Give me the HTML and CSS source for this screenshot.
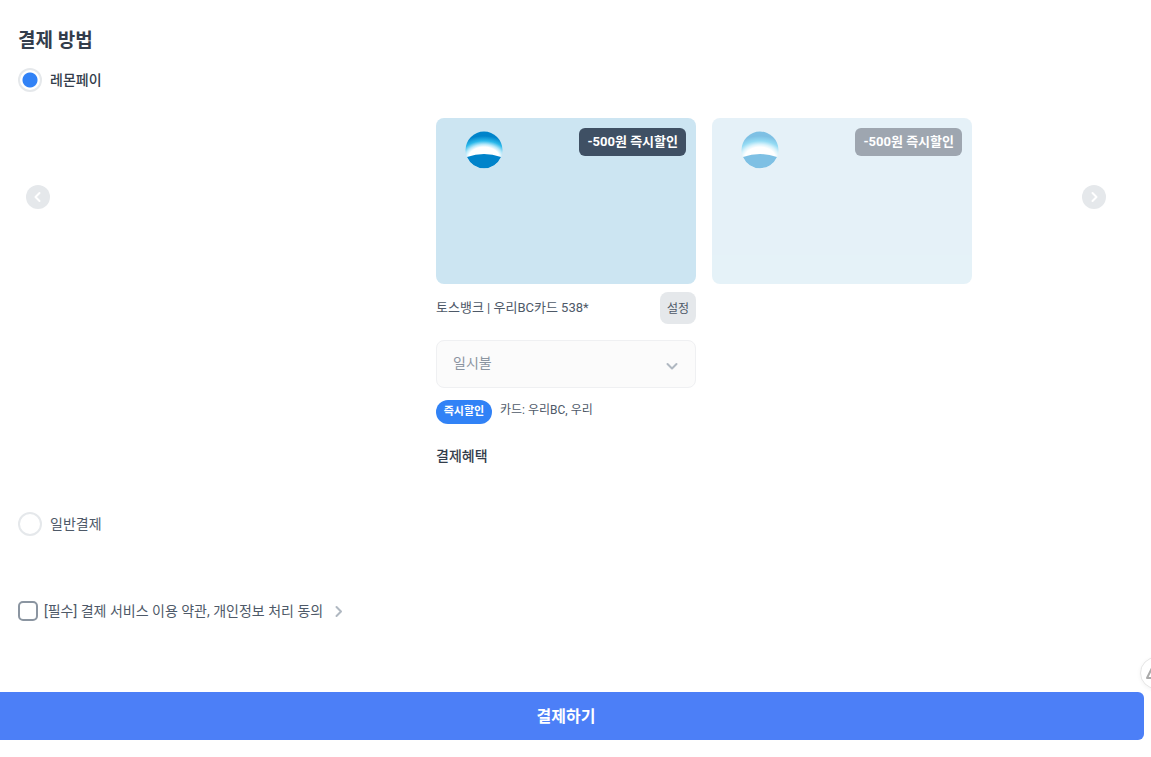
FILE: index.html
```html
<!DOCTYPE html>
<html lang="ko">
<head>
    <meta charset="UTF-8">
    <meta name="viewport" content="width=device-width, initial-scale=1.0">
    <title>결제 방법</title>
    <link rel="stylesheet" href="styles.css">
</head>
<body>
    <form class="payment">
        <h2>결제 방법</h2>

        <label class="method">
            <input type="radio" name="method" value="lemonpay" checked>
            <span>레몬페이</span>
        </label>

        <div class="carousel">
            <div class="slot slot-left">
                <button type="button" class="arrow" aria-label="이전 카드">
                    <svg width="24" height="24" viewBox="0 0 24 24"><path d="M13.5 8 9.5 12l4 4" /></svg>
                </button>
            </div>

            <div class="card">
                <svg class="logo" width="38" height="38" viewBox="0 0 38 38">
                    <defs>
                        <radialGradient id="glow" gradientUnits="userSpaceOnUse" cx="0" cy="0" r="1" gradientTransform="translate(19 27) scale(31 22)">
                            <stop offset="0.5" stop-color="#fff" />
                            <stop offset="0.62" stop-color="#b5e8fa" />
                            <stop offset="0.78" stop-color="#2bb8ea" />
                            <stop offset="1" stop-color="#0083ca" />
                        </radialGradient>
                    </defs>
                    <circle cx="19" cy="19" r="18.5" fill="url(#glow)" />
                    <path d="M2 26Q19 20 36 26A18.500 18.500 0 0 1 2 26Z" fill="#0083ca" />
                </svg>
                <span class="discount">-500원 즉시할인</span>
            </div>

            <div class="slot slot-right">
                <div class="card card-next">
                    <svg class="logo" width="38" height="38" viewBox="0 0 38 38">
                        <circle cx="19" cy="19" r="18.5" fill="url(#glow)" />
                        <path d="M2 26Q19 20 36 26A18.500 18.500 0 0 1 2 26Z" fill="#0083ca" />
                    </svg>
                    <span class="discount">-500원 즉시할인</span>
                </div>
                <button type="button" class="arrow" aria-label="다음 카드">
                    <svg width="24" height="24" viewBox="0 0 24 24"><path d="m10.500 8 4 4-4 4" /></svg>
                </button>
            </div>
        </div>

        <div class="detail">
            <div class="card-name">
                <span>토스뱅크 | 우리BC카드 538*</span>
                <button type="button" class="setting">설정</button>
            </div>
            <div class="installment">
                <select name="installment" aria-label="할부 선택">
                    <option>일시불</option>
                </select>
                <svg class="chevron" width="16" height="16" viewBox="0 0 16 16"><path d="m3.500 6 4.500 4.500 4.500-4.500" /></svg>
            </div>
            <p class="promotion"><span class="tag">즉시할인</span><span>카드: 우리BC, 우리</span></p>
            <h3>결제혜택</h3>
        </div>

        <label class="method method-normal">
            <input type="radio" name="method" value="normal">
            <span>일반결제</span>
        </label>

        <div class="agreement">
            <label>
                <input type="checkbox" name="agree">
                <span>[필수] 결제 서비스 이용 약관, 개인정보 처리 동의</span>
            </label>
            <button type="button" class="terms" aria-label="약관 보기">
                <svg width="16" height="16" viewBox="0 0 16 16"><path d="m5.500 4 4.500 4.500-4.500 4.500" /></svg>
            </button>
        </div>

        <button type="submit" class="pay">결제하기</button>
    </form>

    <button type="button" class="floating" aria-label="맨 위로">
        <svg width="20" height="20" viewBox="0 0 20 20"><path d="M8 1 15 15H1Z" /></svg>
    </button>
</body>
</html>
```

FILE: styles.css
```css
* {
    box-sizing: border-box;
}
body {
    margin: 0;
    overflow-x: hidden;
    background-color: #fff;
    color: #4e5968;
    font-family: Roboto, "Noto Sans CJK KR", sans-serif;
    font-size: 14px;
    line-height: 24px;
}
button, select {
    font-family: inherit;
    cursor: pointer;
}
button {
    padding: 0;
    border: none;
}
svg {
    display: block;
    fill: none;
    stroke-width: 2;
    stroke-linecap: round;
    stroke-linejoin: round;
}
.logo {
    margin-top: 3px;
    stroke: none;
}
input {
    appearance: none;
    flex: none;
    margin: 0;
    background-color: #fff;
}
.payment {
    padding: 25px 37px 17px 18px;
}
h2 {
    margin: 0 0 11px;
    color: #333d4b;
    font-size: 19px;
    line-height: 32px;
}
.method {
    display: flex;
    align-items: center;
    gap: 8px;
}
.method input {
    width: 24px;
    height: 24px;
    border: 2px solid #e5e8eb;
    border-radius: 50%;
}
.method input:checked {
    background: radial-gradient(circle, #3182f6 7px, #fff 8px);
}
.method input:checked + span {
    color: #333d4b;
    font-weight: 500;
}
.carousel {
    display: grid;
    grid-template-columns: 1fr 260px 1fr;
    gap: 16px;
    margin-top: 26px;
}
.slot {
    display: flex;
    align-items: center;
    padding-bottom: 8px;
}
.slot-left {
    padding-left: 8px;
}
.slot-right {
    align-items: flex-start;
    justify-content: space-between;
    padding: 0 8px 0 0;
}
.slot-right .arrow {
    margin-top: 67px;
}
.arrow {
    width: 24px;
    height: 24px;
    border-radius: 50%;
    background-color: #e5e8eb;
    stroke: #fff;
}
.card {
    display: flex;
    align-items: flex-start;
    justify-content: space-between;
    width: 260px;
    height: 166px;
    padding: 10px 10px 10px 29px;
    border-radius: 8px;
    background-color: #cce5f2;
}
.card-next {
    opacity: 0.5;
}
.discount {
    padding: 0 8px;
    border-radius: 6px;
    background-color: #3f5064;
    color: #fff;
    font-size: 13px;
    font-weight: bold;
    line-height: 28px;
}
.detail {
    width: 260px;
    margin: 8px auto 0;
}
.card-name {
    display: flex;
    align-items: center;
    justify-content: space-between;
    font-size: 13px;
}
.setting {
    width: 36px;
    height: 32px;
    padding-bottom: 2px;
    border-radius: 8px;
    background-color: #e5e8eb;
    color: #4e5968;
    font-size: 12px;
}
.installment {
    position: relative;
    margin: 16px 0 12px;
}
.installment select {
    display: block;
    appearance: none;
    width: 100%;
    height: 48px;
    padding: 0 16px 2px;
    border: 1px solid #eff0f2;
    border-radius: 8px;
    background-color: #fbfbfb;
    color: #8b95a1;
    font-size: 14px;
}
.chevron {
    position: absolute;
    top: 18px;
    right: 16px;
    stroke: #b0b8c1;
    pointer-events: none;
}
.promotion {
    display: flex;
    gap: 8px;
    margin: 0 0 20px;
    font-size: 12px;
    line-height: 20px;
}
.tag {
    width: 56px;
    border-radius: 12px;
    background-color: #3182f6;
    color: #fff;
    font-size: 11px;
    font-weight: bold;
    line-height: 24px;
    text-align: center;
}
h3 {
    margin: 0;
    color: #333d4b;
    font-size: 14px;
    font-weight: 500;
}
.method-normal {
    margin-top: 44px;
}
.agreement {
    display: flex;
    align-items: center;
    gap: 8px;
    margin: 63px 0 69px;
}
.agreement label {
    display: flex;
    align-items: center;
    gap: 6px;
}
.agreement input {
    width: 20px;
    height: 20px;
    border: 2px solid #8b95a1;
    border-radius: 5px;
}
.agreement input:checked {
    background-color: #3182f6;
}
.terms {
    background: none;
    stroke: #b0b8c1;
}
.pay {
    display: block;
    width: calc(100% + 60px);
    height: 48px;
    margin: 0 -30px;
    padding-bottom: 2px;
    border-radius: 6px;
    background-color: #4c7ff7;
    color: #fff;
    font-size: 16px;
    font-weight: bold;
}
.floating {
    position: fixed;
    right: -21px;
    bottom: 68px;
    display: flex;
    align-items: center;
    justify-content: center;
    width: 32px;
    height: 32px;
    border: 1px solid #e5e5e5;
    border-radius: 50%;
    background-color: #fff;
    box-shadow: 0 1px 4px rgba(0, 0, 0, 0.05);
    stroke: #aaa;
}
```
